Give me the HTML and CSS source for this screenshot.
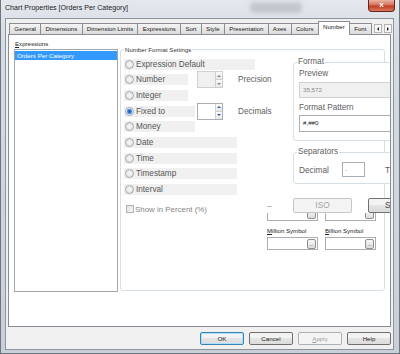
FILE: index.html
```html
<!DOCTYPE html>
<html lang="en">
<head>
    <meta charset="UTF-8">
    <title>Chart Properties [Orders Per Category]</title>
    <link rel="stylesheet" href="styles.css">
</head>
<body>
    <div class="window">
        <div class="titlebar">
            <span class="title">Chart Properties [Orders Per Category]</span>
            <span class="glass"></span>
            <span class="close">x</span>
        </div>

        <div class="dialog">
            <div class="tabs">
                <div class="tab">General</div>
                <div class="tab">Dimensions</div>
                <div class="tab">Dimension Limits</div>
                <div class="tab">Expressions</div>
                <div class="tab">Sort</div>
                <div class="tab">Style</div>
                <div class="tab">Presentation</div>
                <div class="tab">Axes</div>
                <div class="tab">Colors</div>
                <div class="tab active">Number</div>
                <div class="tab">Font</div>
                <div class="tab-scroll">
                    <span class="arrow left"></span>
                    <span class="arrow right"></span>
                </div>
            </div>

            <div class="panel">
                <div class="expressions">
                    <div class="small-label"><u>E</u>xpressions</div>
                    <div class="listbox">
                        <div class="list-item selected">Orders Per Category</div>
                    </div>
                </div>

                <fieldset class="group nfs">
                    <legend>Number Format Settings</legend>
                    <div class="nfs-body">
                        <div class="formats">
                            <div class="opt">
                                <label class="choice w-xl"><span class="radio"></span>Expression Default</label>
                            </div>
                            <div class="opt">
                                <div class="opt-cell">
                                    <label class="choice w-s"><span class="radio"></span>Number</label>
                                </div>
                                <div class="spin disabled"><span class="spin-btns"><i class="up"></i><i class="down"></i></span></div>
                                <span class="unit">Precision</span>
                            </div>
                            <div class="opt">
                                <label class="choice w-s"><span class="radio"></span>Integer</label>
                            </div>
                            <div class="opt">
                                <div class="opt-cell">
                                    <label class="choice w-m"><span class="radio on"></span>Fixed to</label>
                                </div>
                                <div class="spin"><span class="spin-btns"><i class="up"></i><i class="down"></i></span></div>
                                <span class="unit">Decimals</span>
                            </div>
                            <div class="opt">
                                <label class="choice w-m"><span class="radio"></span>Money</label>
                            </div>
                            <div class="opt">
                                <label class="choice w-l"><span class="radio"></span>Date</label>
                            </div>
                            <div class="opt">
                                <label class="choice w-l"><span class="radio"></span>Time</label>
                            </div>
                            <div class="opt">
                                <label class="choice w-l"><span class="radio"></span>Timestamp</label>
                            </div>
                            <div class="opt">
                                <label class="choice w-l"><span class="radio"></span>Interval</label>
                            </div>
                            <div class="opt percent">
                                <span class="check"></span>Show in Percent (%)
                            </div>
                        </div>

                        <div class="extras">
                            <fieldset class="group box">
                                <legend>Format</legend>
                                <div class="field-label">Preview</div>
                                <div class="preview">35,572</div>
                                <div class="field-label gap">Format Pattern</div>
                                <div class="pattern">#,##0</div>
                            </fieldset>

                            <fieldset class="group box separators">
                                <legend>Separators</legend>
                                <div class="sep-row">
                                    <span class="sep-label">Decimal</span>
                                    <span class="sep-input">.</span>
                                    <span class="sep-label next">T</span>
                                </div>
                            </fieldset>

                            <div class="iso-row">
                                <span class="dash">–</span>
                                <span class="btn-wide disabled">ISO</span>
                                <span class="btn-wide system">S</span>
                            </div>

                            <div class="sym-cut">
                                <div class="sym"><span class="dots"></span></div>
                                <div class="sym"><span class="dots"></span></div>
                            </div>

                            <div class="sym-grid">
                                <div class="small-label"><u>M</u>illion Symbol</div>
                                <div class="small-label"><u>B</u>illion Symbol</div>
                                <div class="sym"><span class="dots">...</span></div>
                                <div class="sym"><span class="dots">...</span></div>
                            </div>
                        </div>
                    </div>
                </fieldset>
            </div>

            <div class="footer">
                <span class="btn default">OK</span>
                <span class="btn">Cancel</span>
                <span class="btn disabled"><u>A</u>pply</span>
                <span class="btn">Help</span>
            </div>
        </div>
    </div>
</body>
</html>
```

FILE: styles.css
```css
* {
    margin: 0;
    padding: 0;
    box-sizing: border-box;
}

body {
    width: 400px;
    height: 354px;
    overflow: hidden;
    font-family: "Liberation Sans", Arial, sans-serif;
    color: #222;
    background: #c9d0d8;
}

.window {
    height: 354px;
    display: flex;
    flex-direction: column;
    border: 1px solid #6e7781;
    border-top: none;
    background: linear-gradient(#e4e8ed, #d6dce3 40px, #c8cfd7);
}

/* title bar */

.titlebar {
    height: 18px;
    flex: none;
    display: flex;
    align-items: flex-start;
}

.title {
    font-size: 7.1px;
    line-height: 9px;
    padding: 4px 0 0 4px;
    color: #1b1b1b;
    white-space: nowrap;
}

.glass {
    width: 52px;
    height: 11px;
    margin: 2px 0 0 auto;
    background: #7d838b;
    opacity: 0.3;
    filter: blur(2px);
    border-radius: 4px;
}

.close {
    width: 27px;
    height: 12px;
    margin: 0 4px 0 66px;
    border: 1px solid #6b2217;
    border-top: none;
    border-radius: 0 0 4px 4px;
    background: linear-gradient(#ebb3a6, #d6735e 45%, #c23b22 55%, #d77a62);
    color: #fff;
    font-size: 8px;
    font-weight: bold;
    line-height: 10px;
    text-align: center;
}

/* dialog */

.dialog {
    flex: 1;
    margin: 0 5px 3px 4px;
    border: 1px solid #8d949c;
    background: #f0f0f0;
    display: flex;
    flex-direction: column;
}

.tabs {
    height: 14px;
    margin: 2px 0 -1px 3px;
    display: flex;
    align-items: flex-end;
    flex: none;
}

.tab {
    height: 11px;
    margin-bottom: 1px;
    padding: 0 4.25px;
    border: 1px solid #898c95;
    border-bottom: none;
    margin-left: -1px;
    background: linear-gradient(#f4f4f4, #e8e8e8 50%, #dcdcdc);
    font-size: 6.1px;
    line-height: 10px;
    white-space: nowrap;
}

.tab:first-child {
    margin-left: 0;
}

.tab.active {
    height: 14px;
    margin-bottom: 0;
    background: #fff;
    position: relative;
    z-index: 1;
}

.tab-scroll {
    display: flex;
    gap: 2px;
    margin: 0 0 2px 2px;
}

.arrow {
    width: 8px;
    height: 9px;
    border: 1px solid #b5b5b5;
    background: #f6f6f6;
    display: flex;
    align-items: center;
    justify-content: center;
}

.arrow::after {
    content: "";
    border-top: 2px solid transparent;
    border-bottom: 2px solid transparent;
}

.arrow.left::after {
    border-right: 2px solid #222;
}

.arrow.right::after {
    border-left: 2px solid #222;
}

.panel {
    flex: 1;
    margin: 0 2px;
    border: 1px solid #898c95;
    background: #fff;
    overflow: hidden;
    display: flex;
    align-items: flex-start;
    padding: 5px 0 0 5px;
}

.small-label {
    font-size: 6.1px;
    line-height: 8px;
    padding-left: 1px;
    white-space: nowrap;
}

/* expressions list */

.expressions {
    width: 104px;
    flex: none;
}

.listbox {
    margin-top: 1px;
    height: 243px;
    border: 1px solid #a3a6ab;
    padding: 1px 0;
}

.list-item {
    height: 9px;
    font-size: 6.2px;
    line-height: 9px;
    padding-left: 2px;
}

.list-item.selected {
    background: #3399ff;
    color: #fff;
}

/* group boxes */

.group {
    border: 1px solid #d5dfe5;
    border-radius: 3px;
    min-width: 0;
}

.group legend {
    padding: 0 1px;
    white-space: nowrap;
}

.nfs {
    width: 265px;
    height: 246px;
    flex: none;
    margin: 5px 0 0 2px;
    padding: 0 0 0 3px;
}

.nfs legend {
    font-size: 6.1px;
    line-height: 9px;
    color: #333;
}

.nfs-body {
    display: flex;
}

.formats {
    width: 143px;
    flex: none;
    padding-top: 4.5px;
    display: flex;
    flex-direction: column;
    gap: 4.7px;
}

.opt {
    height: 11px;
    display: flex;
    align-items: center;
}

.opt-cell {
    width: 73px;
    flex: none;
}

.choice {
    height: 11px;
    display: flex;
    align-items: center;
    gap: 2px;
    padding-left: 1px;
    background: #f0f0f0;
    font-size: 8.2px;
    color: #575757;
    white-space: nowrap;
}

.w-s { width: 64px; }
.w-m { width: 71px; }
.w-l { width: 113px; }
.w-xl { width: 131px; }

.radio {
    width: 9px;
    height: 9px;
    flex: none;
    border: 1px solid #a6a8ab;
    border-radius: 50%;
    background: radial-gradient(circle, #f6f6f6 0, #e0e0e0 100%);
}

.radio.on {
    background: radial-gradient(circle, #1f63c0 0, #2f78d4 1.8px, #8ebcf0 2.6px, #f4f4f4 3.2px);
}

.spin {
    width: 26px;
    height: 17px;
    flex: none;
    border: 1px solid #abadb3;
    background: #fff;
    display: flex;
    justify-content: flex-end;
}

.spin.disabled {
    border-color: #cfcfcf;
    background: #f0f0f0;
}

.spin-btns {
    width: 7px;
    display: flex;
    flex-direction: column;
    border-left: 1px solid #cfcfcf;
}

.spin-btns i {
    flex: 1;
    display: flex;
    align-items: center;
    justify-content: center;
    background: linear-gradient(#fbfbfb, #e6e6e6);
}

.spin-btns i.up {
    border-bottom: 1px solid #cfcfcf;
}

.spin-btns i::after {
    content: "";
    border-left: 2px solid transparent;
    border-right: 2px solid transparent;
}

.spin-btns i.up::after {
    border-bottom: 2px solid #888;
}

.spin-btns i.down::after {
    border-top: 2px solid #888;
}

.spin:not(.disabled) .spin-btns i.up::after {
    border-bottom-color: #2b5ea8;
}

.spin:not(.disabled) .spin-btns i.down::after {
    border-top-color: #2b5ea8;
}

.unit {
    margin-left: 15px;
    font-size: 8.2px;
    color: #5e5e5e;
    white-space: nowrap;
}

.opt.percent {
    margin-top: 4px;
    gap: 1px;
    font-size: 7.9px;
    color: #858585;
    white-space: nowrap;
}

.check {
    width: 8px;
    height: 8px;
    margin-left: 2px;
    border: 1px solid #b0b0b0;
    background: linear-gradient(135deg, #e2e2e2, #f7f7f7);
}

/* right side */

.extras {
    width: 170px;
    flex: none;
    padding-top: 3px;
    display: flex;
    flex-direction: column;
    align-items: flex-start;
}

.box {
    width: 120px;
    margin-left: 26px;
    padding: 0 0 8px 5px;
    background: #fff;
}

.box legend {
    margin-left: -2px;
    font-size: 8.2px;
    line-height: 10px;
    color: #5e5e5e;
}

.field-label {
    margin-top: 2px;
    font-size: 8.2px;
    line-height: 10px;
    color: #5e5e5e;
    white-space: nowrap;
}

.field-label.gap {
    margin-top: 5px;
}

.preview {
    margin-top: 3px;
    height: 16px;
    border: 1px solid #d2d2d2;
    background: #f0f0f0;
    padding-left: 3px;
    font-size: 6.2px;
    line-height: 14px;
    color: #8a8a8a;
}

.pattern {
    margin-top: 2px;
    height: 17px;
    border: 1px solid #abadb3;
    background: #fff;
    padding: 1px 0 0 3px;
    font-size: 6.2px;
    line-height: 12px;
    color: #222;
}

.separators {
    margin-top: 6px;
    padding: 5px 0 6px 5px;
}

.sep-row {
    display: flex;
    align-items: center;
}

.sep-label {
    width: 43px;
    font-size: 8.3px;
    color: #5e5e5e;
}

.sep-label.next {
    width: auto;
    margin-left: 20px;
}

.sep-input {
    width: 23px;
    height: 15px;
    border: 1px solid #abadb3;
    padding-left: 2px;
    font-size: 8px;
    line-height: 11px;
    color: #777;
}

.iso-row {
    margin-top: 14px;
    height: 15px;
    display: flex;
    align-items: center;
    font-size: 8.3px;
}

.dash {
    width: 26px;
    color: #9a9a9a;
}

.btn-wide {
    width: 59px;
    height: 15px;
    border: 1px solid #707070;
    border-radius: 2px;
    background: linear-gradient(#f3f3f3 50%, #e4e4e4 50%, #dadada);
    line-height: 13px;
    text-align: center;
    white-space: nowrap;
}

.btn-wide.disabled {
    border-color: #c7c7c7;
    background: #f4f4f4;
    color: #a3a3a3;
}

.btn-wide.system {
    width: 60px;
    margin-left: 16px;
    padding-left: 16px;
    text-align: left;
    color: #444;
}

.sym-cut {
    height: 8px;
    overflow: hidden;
    display: flex;
    gap: 7px;
}

.sym-cut .sym {
    margin-top: -6px;
    height: 14px;
}

.sym-grid {
    margin-top: 6px;
    display: grid;
    grid-template-columns: 51px 51px;
    column-gap: 7px;
    row-gap: 2px;
}

.sym-grid .small-label {
    padding-left: 0;
}

.sym {
    width: 51px;
    height: 13px;
    border: 1px solid #abadb3;
    background: #fff;
    display: flex;
    align-items: center;
    justify-content: flex-end;
    padding-right: 1px;
}

.dots {
    width: 9px;
    height: 10px;
    border: 1px solid #8e8f8f;
    border-radius: 2px;
    background: linear-gradient(#f7f7f7, #dddddd);
    font-size: 5px;
    line-height: 9px;
    text-align: center;
    color: #333;
}

/* bottom buttons */

.footer {
    height: 22px;
    flex: none;
    display: flex;
    justify-content: flex-end;
    gap: 5px;
    padding: 5px 2px 0 0;
}

.btn {
    width: 44px;
    height: 13px;
    border: 1px solid #707070;
    border-radius: 2px;
    background: linear-gradient(#f3f3f3 50%, #e5e5e5 50%, #dcdcdc);
    font-size: 6.2px;
    line-height: 11px;
    text-align: center;
}

.btn.default {
    border-color: #3c7fb1;
    box-shadow: inset 0 0 0 1px #a9e2fa;
}

.btn.disabled {
    border-color: #adb2b5;
    background: #f4f4f4;
    color: #a0a0a0;
}
```
